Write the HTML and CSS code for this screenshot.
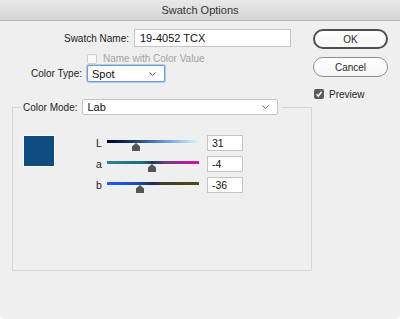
FILE: index.html
```html
<!DOCTYPE html>
<html>
<head>
<meta charset="utf-8">
<link rel="stylesheet" href="styles.css">
</head>
<body>
<div class="window">
  <div class="titlebar">Swatch Options</div>
  <div class="main">
    <div class="left">
      <div class="row-name">
        <span class="lbl lbl-name">Swatch Name:</span>
        <div class="textbox name-box">19-4052 TCX</div>
      </div>
      <div class="row-check">
        <span class="cb cb-off"></span>
        <span class="disabled">Name with Color Value</span>
      </div>
      <div class="row-type">
        <span class="lbl lbl-type">Color Type:</span>
        <div class="select select-type focus"><span>Spot</span><svg class="chev" width="7" height="4" viewBox="0 0 7 4"><polyline points="0.5,0.5 3.5,3.5 6.5,0.5" fill="none" stroke="#666" stroke-width="1"/></svg></div>
      </div>
      <fieldset class="group">
        <legend class="legend">
          <span class="lbl">Color Mode:</span>
          <div class="select select-mode"><span>Lab</span><svg class="chev" width="7" height="4" viewBox="0 0 7 4"><polyline points="0.5,0.5 3.5,3.5 6.5,0.5" fill="none" stroke="#666" stroke-width="1"/></svg></div>
        </legend>
        <div class="fs-body">
          <div class="swatch"></div>
          <div class="sliders">
            <div class="srow">
              <span class="slbl">L</span>
              <div class="track">
                <div class="bar bar-l"></div>
                <svg class="thumb" style="left: 31%" width="8" height="8" viewBox="0 0 8 8"><polygon points="4,0 8,3.5 8,8 0,8 0,3.5" fill="#555"/></svg>
              </div>
              <div class="textbox num">31</div>
            </div>
            <div class="srow">
              <span class="slbl">a</span>
              <div class="track">
                <div class="bar bar-a"></div>
                <svg class="thumb" style="left: 48.6%" width="8" height="8" viewBox="0 0 8 8"><polygon points="4,0 8,3.5 8,8 0,8 0,3.5" fill="#555"/></svg>
              </div>
              <div class="textbox num">-4</div>
            </div>
            <div class="srow">
              <span class="slbl">b</span>
              <div class="track">
                <div class="bar bar-b"></div>
                <svg class="thumb" style="left: 36.1%" width="8" height="8" viewBox="0 0 8 8"><polygon points="4,0 8,3.5 8,8 0,8 0,3.5" fill="#555"/></svg>
              </div>
              <div class="textbox num">-36</div>
            </div>
          </div>
        </div>
      </fieldset>
    </div>
    <div class="right">
      <div class="btn btn-default">OK</div>
      <div class="btn btn-cancel">Cancel</div>
      <div class="row-preview">
        <span class="cb cb-on"><svg width="8" height="8" viewBox="0 0 8 8"><polyline points="1.5,4.2 3.3,6 6.6,1.8" fill="none" stroke="#fff" stroke-width="1.5"/></svg></span>
        <span>Preview</span>
      </div>
    </div>
  </div>
</div>
</body>
</html>
```

FILE: styles.css
```css
html {
  background: #ffffff;
}
body {
  margin: 0;
  font-family: "Liberation Sans", Arial, sans-serif;
  font-size: 10px;
  color: #1c1c1c;
}
.window {
  width: 400px;
  height: 319px;
  background: #efefef;
  border-radius: 0 0 5px 5px;
  overflow: hidden;
}
.titlebar {
  height: 20px;
  border-bottom: 1px solid #b4b4b4;
  background: linear-gradient(#e9e9e9, #d4d4d4);
  display: flex;
  align-items: center;
  justify-content: center;
  font-size: 11px;
  color: #333;
}
.main {
  display: flex;
}
.left {
  width: 313px;
  padding-top: 8px;
}
.right {
  width: 75px;
  padding-top: 8px;
}
.lbl {
  white-space: nowrap;
}
.row-name {
  display: flex;
  align-items: center;
  height: 18px;
}
.lbl-name {
  width: 129px;
  text-align: right;
  margin-right: 5px;
}
.textbox {
  box-sizing: border-box;
  background: #ffffff;
  border: 1px solid #c4c4c4;
  display: flex;
  align-items: center;
}
.name-box {
  width: 157px;
  height: 18px;
  padding-left: 5px;
  font-size: 11px;
  color: #111;
}
.row-check {
  margin-top: 6px;
  margin-left: 87px;
  height: 11px;
  display: flex;
  align-items: center;
  gap: 6px;
}
.cb {
  box-sizing: border-box;
  width: 10px;
  height: 10px;
  border-radius: 2px;
  display: flex;
  align-items: center;
  justify-content: center;
}
.cb-off {
  border: 1px solid #cfcfcf;
  background: #f9f9f9;
}
.cb-on {
  background: #5c5c5c;
}
.disabled {
  color: #a3a3a3;
}
.row-type {
  margin-top: 1px;
  display: flex;
  align-items: center;
  height: 17px;
}
.lbl-type {
  width: 82px;
  text-align: right;
  margin-right: 5px;
}
.select {
  box-sizing: border-box;
  background: #ffffff;
  border: 1px solid #c6c6c6;
  border-radius: 2px;
  display: flex;
  align-items: center;
  justify-content: space-between;
  padding: 0 8px 0 4px;
  font-size: 11px;
  color: #111;
}
.select-type {
  width: 78px;
  height: 17px;
}
.focus {
  border-color: #6b9be0;
  box-shadow: 0 0 0 1px rgba(107, 155, 224, 0.45);
}
.chev {
  display: block;
}
.group {
  margin: 17px 0 0 12px;
  width: 300px;
  box-sizing: border-box;
  border: 1px solid #d6d6d6;
  padding: 0 0 0 8px;
}
.legend {
  display: flex;
  align-items: center;
  padding: 0 4px 0 2px;
  height: 16px;
}
.select-mode {
  width: 196px;
  height: 16px;
  margin-left: 5px;
}
.fs-body {
  height: 155px;
  box-sizing: border-box;
  padding-top: 20px;
  display: flex;
  align-items: flex-start;
}
.swatch {
  margin-left: 2px;
  width: 30px;
  height: 30px;
  background: #0f4c81;
  border: 1px solid #fafafa;
}
.sliders {
  margin-left: 40px;
  display: flex;
  flex-direction: column;
  gap: 5px;
}
.srow {
  display: flex;
  align-items: center;
  height: 16px;
}
.slbl {
  width: 8px;
  text-align: center;
  font-size: 10.5px;
}
.track {
  position: relative;
  width: 92px;
  height: 16px;
  margin-left: 4px;
  margin-right: 8px;
}
.bar {
  position: absolute;
  left: 0;
  right: 0;
  top: 5px;
  height: 3px;
}
.bar-l {
  background: linear-gradient(90deg, #00002a 0%, #14325e 25%, #4a78aa 50%, #8cb8e8 75%, #dcfaff 100%);
}
.bar-a {
  background: linear-gradient(90deg, #2a8595 0%, #22697f 40%, #173c5c 50%, #6a3d8a 62%, #b0208f 82%, #d6129a 100%);
}
.bar-b {
  background: linear-gradient(90deg, #1f5cff 0%, #1b4fb8 30%, #1c2f50 50%, #3b3a30 60%, #524c10 100%);
}
.thumb {
  position: absolute;
  top: 8px;
  margin-left: -4px;
  display: block;
}
.num {
  width: 36px;
  height: 16px;
  padding-left: 4px;
  font-size: 10.5px;
  color: #111;
}
.btn {
  box-sizing: border-box;
  width: 75px;
  height: 20px;
  border-radius: 10px;
  background: linear-gradient(#ffffff, #f6f6f6);
  display: flex;
  align-items: center;
  justify-content: center;
  color: #2a2a2a;
}
.btn-default {
  border: 2px solid #4f4f4f;
}
.btn-cancel {
  margin-top: 8px;
  border: 1px solid #8e8e8e;
}
.row-preview {
  margin-top: 12px;
  height: 10px;
  display: flex;
  align-items: center;
  gap: 5px;
  margin-left: 1px;
}
```
